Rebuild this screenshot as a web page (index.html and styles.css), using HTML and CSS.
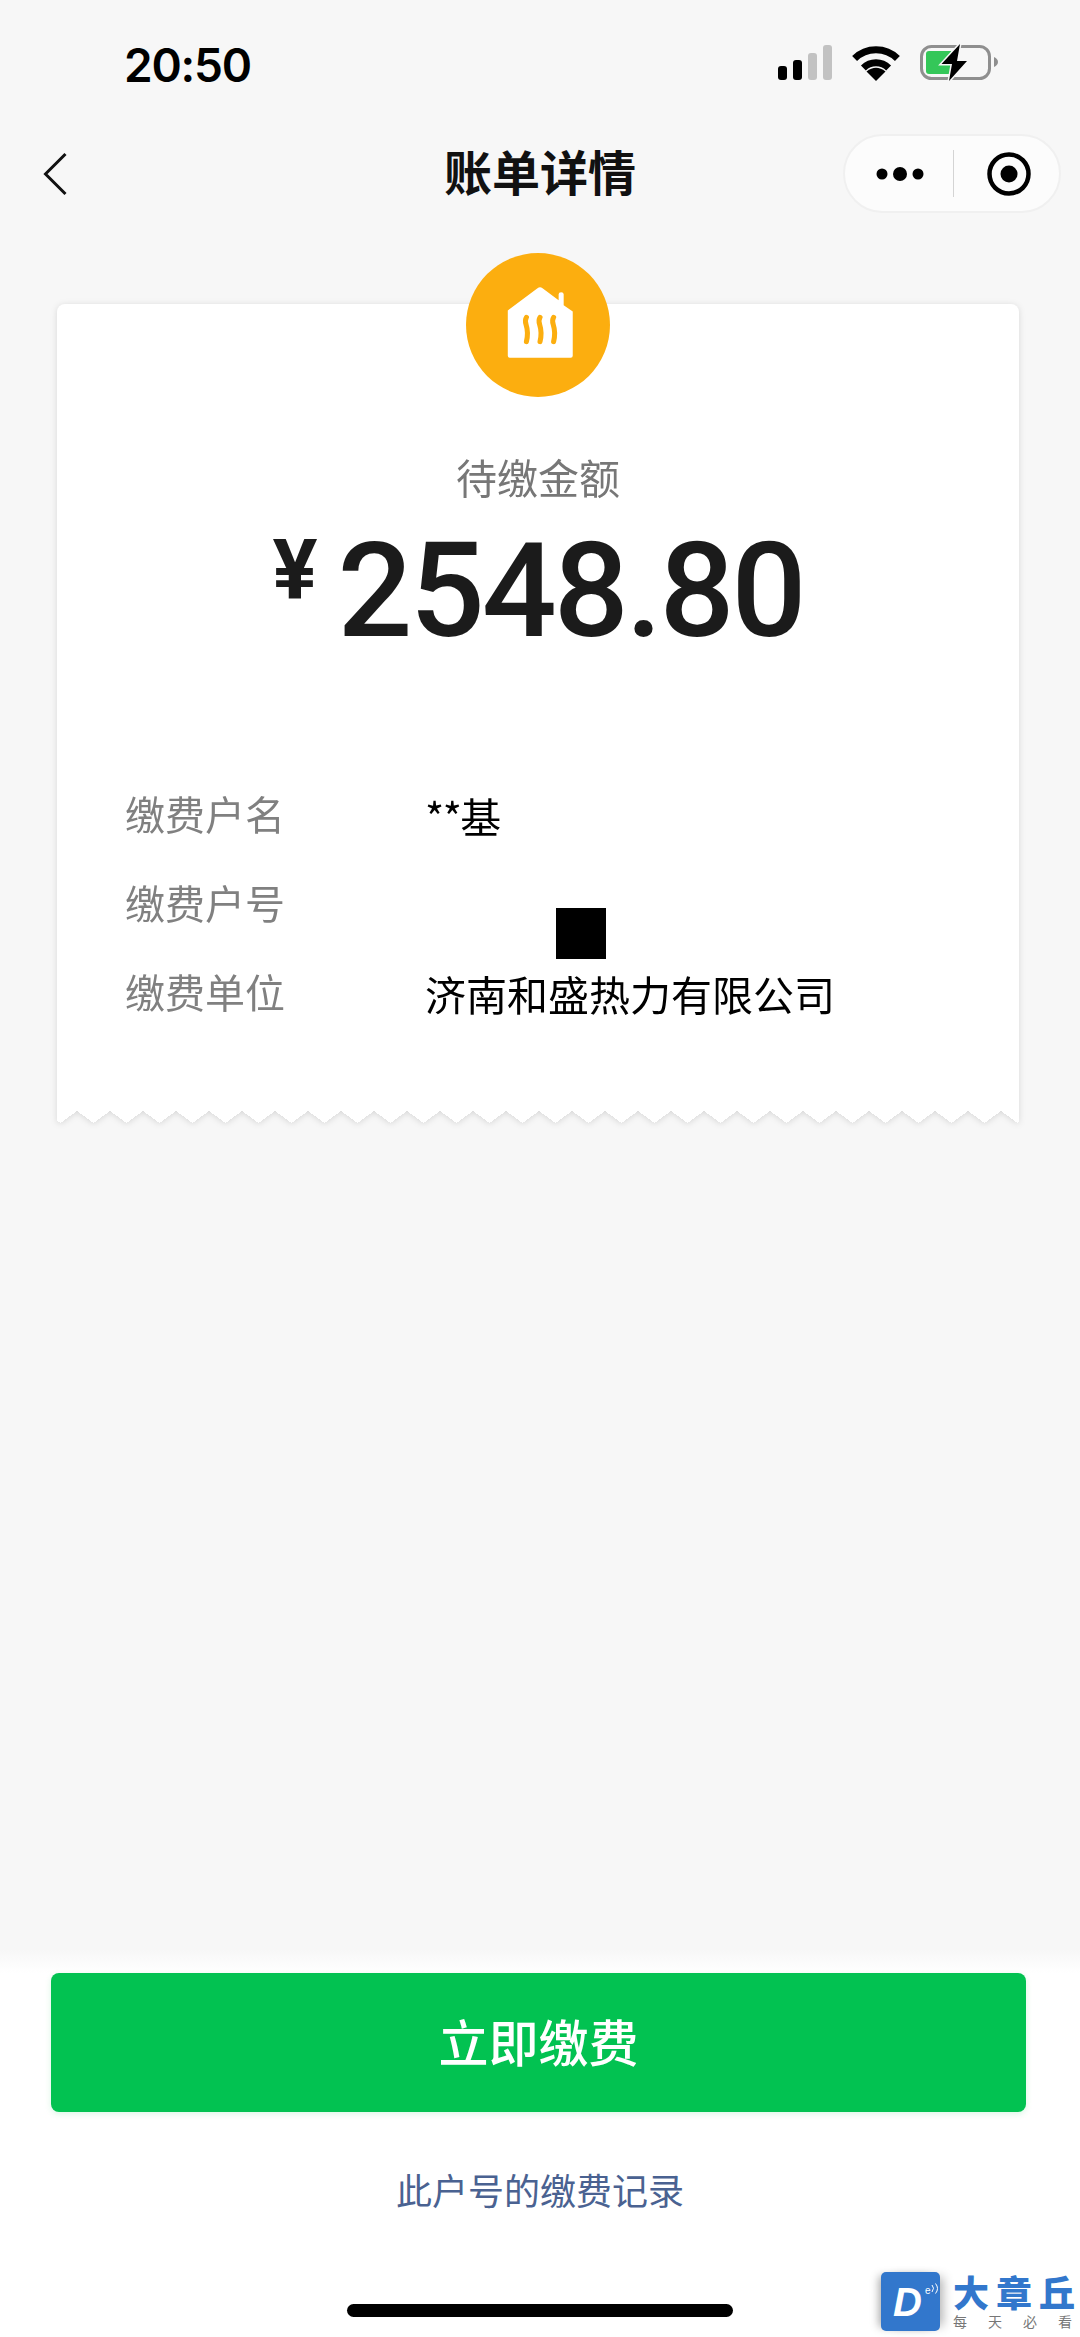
FILE: index.html
```html
<!DOCTYPE html>
<html lang="zh-CN">
<head>
  <meta charset="UTF-8">
  <title>账单详情</title>
  <link rel="stylesheet" href="styles.css">
</head>
<body>
  <!-- Status bar -->
  <div class="status-bar">
    <span class="status-time">20:50</span>
    <div class="status-icons">
      <svg class="icon-signal" width="54" height="36" viewBox="0 0 54 36">
        <rect x="0" y="21" width="9" height="14" rx="3" fill="#000"/>
        <rect x="15" y="15" width="9" height="20" rx="3" fill="#000"/>
        <rect x="30" y="8" width="9" height="27" rx="3" fill="#c2c2c2"/>
        <rect x="45" y="0" width="9" height="35" rx="3" fill="#c2c2c2"/>
      </svg>
      <svg class="icon-wifi" width="48" height="36" viewBox="0 0 48 36">
        <path d="M2.6 13.6a30.5 30.5 0 0 1 42.8 0" fill="none" stroke="#000" stroke-width="7"/>
        <path d="M11.4 23a18 18 0 0 1 25.2 0" fill="none" stroke="#000" stroke-width="7"/>
        <path d="M24 36 14.5 26.5Q24 19 33.5 26.5Z" fill="#000"/>
      </svg>
      <svg class="icon-battery" width="78" height="38" viewBox="0 0 78 38">
        <rect x="1.5" y="2.5" width="68" height="32" rx="10" fill="none" stroke="#8f8f8f" stroke-width="3"/>
        <path d="M9 7H31V30H9Q6 30 6 27V10Q6 7 9 7Z" fill="#34c759"/>
        <path d="M74 13Q78 15 78 18Q78 21 74 23Z" fill="#8f8f8f"/>
        <path d="M40 0 21.5 20H32L29 37 47 17H37Z" fill="#000" stroke="#f7f7f7" stroke-width="3" paint-order="stroke"/>
      </svg>
    </div>
  </div>

  <!-- Nav bar -->
  <div class="nav-bar">
    <div class="nav-left">
      <svg width="24" height="44" viewBox="0 0 24 44">
        <path d="M22.500 2 2.500 22 22.500 42" fill="none" stroke="#111" stroke-width="3"/>
      </svg>
    </div>
    <div class="nav-title">账单详情</div>
    <div class="nav-right">
      <div class="capsule">
        <svg class="capsule-dots" width="50" height="16" viewBox="0 0 50 16">
          <circle cx="6" cy="8" r="5.500" fill="#000"/>
          <circle cx="24" cy="8" r="7" fill="#000"/>
          <circle cx="42" cy="8" r="5.500" fill="#000"/>
        </svg>
        <div class="capsule-line"></div>
        <svg class="capsule-target" width="46" height="46" viewBox="0 0 46 46">
          <circle cx="23" cy="23" r="19.500" fill="none" stroke="#000" stroke-width="4.500"/>
          <circle cx="23" cy="23" r="8.500" fill="#000"/>
        </svg>
      </div>
    </div>
  </div>

  <!-- Bill card -->
  <div class="bill-section">
    <div class="bill-wrap">
      <div class="bill-card">
        <div class="bill-label">待缴金额</div>
        <div class="bill-amount">
          <span class="amount-unit">¥</span>
          <span class="amount-value">2548.80</span>
        </div>
        <div class="bill-rows">
          <div class="bill-row">
            <span class="row-name">缴费户名</span>
            <span class="row-value"><span class="row-mask">**</span>基</span>
          </div>
          <div class="bill-row">
            <span class="row-name">缴费户号</span>
            <span class="row-value"></span>
          </div>
          <div class="bill-row">
            <span class="row-name">缴费单位</span>
            <span class="row-value">济南和盛热力有限公司</span>
          </div>
        </div>
        <div class="redact-box"></div>
      </div>
      <div class="bill-edge"></div>
    </div>
    <div class="bill-badge">
      <svg width="144" height="144" viewBox="0 0 143 143">
        <path d="M41.500 57 71 35Q73.500 33 76 35L92 47V41Q92 39 94.500 39 97 39 97 41V52L106 58V102Q106 104 104 104H43.500Q41.500 104 41.500 102Z" fill="#fff"/>
        <path d="M60 64c-4 6 4 8 0 24M73.500 64c-4 6 4 8 0 24M87 64c-4 6 4 8 0 24" transform="translate(0 0)" fill="none" stroke="#fcae0f" stroke-width="5" stroke-linecap="round"/>
      </svg>
    </div>
  </div>

  <!-- Bottom actions -->
  <div class="bottom-panel">
    <button type="button" class="btn-pay">立即缴费</button>
    <a class="link-history">此户号的缴费记录</a>
    <div class="home-bar"></div>
  </div>

  <!-- Watermark over the corner -->
  <div class="watermark">
    <div class="wm-logo">
      <span class="wm-d">D</span>
      <span class="wm-e">e</span>
      <svg class="wm-waves" width="8" height="11" viewBox="0 0 8 11">
        <path d="M1 2q3 3 0 7M4.500 .5q4 5 0 10" fill="none" stroke="#fff" stroke-width="1"/>
      </svg>
    </div>
    <div class="wm-text">
      <div class="wm-name"><span>大</span><span>章</span><span>丘</span></div>
      <div class="wm-slogan"><span>每</span><span>天</span><span>必</span><span>看</span></div>
    </div>
  </div>
</body>
</html>
```

FILE: styles.css
```css
* {
  box-sizing: border-box;
}
html, body {
  margin: 0;
  padding: 0;
}
body {
  position: relative;
  width: 1080px;
  height: 2337px;
  overflow: hidden;
  display: flex;
  flex-direction: column;
  background-color: #f7f7f7;
  font-family: "Noto Sans CJK SC", "Noto Sans", sans-serif;
}

/* status bar */
.status-bar {
  height: 134px;
  padding: 39px 82px 0 124px;
  display: flex;
  justify-content: space-between;
  align-items: flex-start;
}
.status-time {
  font-family: Inter, sans-serif;
  font-size: 46px;
  font-weight: 600;
  line-height: 52px;
  letter-spacing: -1.2px;
  color: #000;
}
.status-icons {
  margin-top: 6px;
  display: flex;
  align-items: flex-start;
}
.icon-wifi { margin-left: 20px; }
.icon-battery { margin-left: 20px; margin-top: -1px; }

/* nav bar */
.nav-bar {
  height: 79px;
  padding: 0 19px;
  display: grid;
  grid-template-columns: minmax(0, 1fr) auto minmax(0, 1fr);
  align-items: center;
}
.nav-left {
  padding-left: 24px;
  display: flex;
  align-items: center;
}
.nav-title {
  font-size: 48px;
  font-weight: 700;
  line-height: 72px;
  margin-bottom: 7px;
  color: #111;
}
.nav-right {
  display: flex;
  justify-content: flex-end;
}
.capsule {
  width: 218px;
  height: 79px;
  flex: none;
  border: 2px solid #f0f0f0;
  border-radius: 40px;
  background-color: #fcfcfc;
  display: flex;
  align-items: center;
}
.capsule-dots { margin-left: 31px; }
.capsule-line {
  width: 1px;
  height: 47px;
  margin-left: 27px;
  background-color: #d4d4d4;
}
.capsule-target { margin-left: 32px; }

/* bill card */
.bill-section {
  position: relative;
  margin: 91px 61px 0 57px;
}
.bill-wrap {
  filter: drop-shadow(0 1px 3px rgba(0, 0, 0, 0.13));
}
.bill-card {
  position: relative;
  height: 807px;
  padding: 144px 68px 0;
  background-color: #fff;
  border-radius: 8px 8px 0 0;
}
.bill-edge {
  height: 12px;
  background-image: conic-gradient(from -54deg at 50% 100%, #fff 108deg, transparent 0);
  background-size: 33px 12px;
  background-position: -13px 0;
  background-repeat: repeat-x;
}
.bill-badge {
  position: absolute;
  left: 409px;
  top: -51px;
  width: 144px;
  height: 144px;
  border-radius: 50%;
  background-color: #fcae0f;
}
.bill-label {
  font-size: 41px;
  line-height: 56px;
  color: #777;
  text-align: center;
}
.bill-amount {
  margin-top: 21px;
  display: flex;
  justify-content: center;
  align-items: flex-start;
  color: #1b1b1b;
  font-family: Roboto, sans-serif;
  font-weight: 500;
}
.amount-unit {
  margin-top: 4px;
  margin-right: 20px;
  font-size: 84px;
  font-weight: 700;
  line-height: 84px;
}
.amount-value {
  font-size: 132px;
  line-height: 132px;
  letter-spacing: -3px;
}
.bill-rows {
  margin-top: 128px;
  display: flex;
  flex-direction: column;
  gap: 33px;
}
.bill-row {
  display: flex;
  align-items: center;
  height: 56px;
}
.row-name {
  width: 300px;
  flex: none;
  font-size: 40px;
  color: #808080;
}
.row-value {
  margin-top: 3px;
  font-size: 41px;
  color: #000;
}
.row-mask {
  letter-spacing: -1.5px;
}
.redact-box {
  position: absolute;
  left: 499px;
  top: 604px;
  width: 50px;
  height: 51px;
  background-color: #000;
}

/* bottom actions */
.bottom-panel {
  margin-top: auto;
  height: 387px;
  padding-top: 23px;
  display: flex;
  flex-direction: column;
  align-items: center;
  background: linear-gradient(#f7f7f7, #fff 23px);
}
.btn-pay {
  width: 975px;
  height: 139px;
  margin-left: -3px;
  padding-bottom: 6px;
  flex: none;
  border: 0;
  border-radius: 8px;
  background-color: #02c251;
  box-shadow: 0 2px 6px rgba(2, 194, 81, 0.15);
  color: #fff;
  font-family: inherit;
  font-size: 50px;
  font-weight: 500;
}
.link-history {
  margin-top: 52px;
  font-size: 36px;
  line-height: 50px;
  color: #4a6291;
}
.home-bar {
  width: 386px;
  height: 13px;
  margin-top: 90px;
  border-radius: 7px;
  background-color: #000;
}

/* watermark */
.watermark {
  position: absolute;
  left: 881px;
  top: 2272px;
  display: flex;
}
.wm-logo {
  position: relative;
  width: 59px;
  height: 59px;
  border-radius: 5px;
  background-color: #3277cc;
  box-shadow: -6px 0 8px -4px rgba(0, 0, 0, 0.35), 8px 0 10px -5px rgba(0, 0, 0, 0.3);
}
.wm-d {
  position: absolute;
  left: 12px;
  top: 10px;
  font-family: "Liberation Sans", sans-serif;
  font-size: 40px;
  font-style: italic;
  font-weight: 700;
  line-height: 40px;
  color: #fff;
}
.wm-e {
  position: absolute;
  left: 44px;
  top: 14px;
  font-family: "Liberation Sans", sans-serif;
  font-size: 10px;
  line-height: 10px;
  color: #fff;
}
.wm-waves {
  position: absolute;
  left: 50px;
  top: 11px;
}
.wm-text {
  margin-left: 13px;
}
.wm-name {
  margin-top: 1px;
  display: flex;
  gap: 7px;
  font-size: 36px;
  font-weight: 900;
  line-height: 36px;
  color: #3277cc;
}
.wm-slogan {
  margin-top: 4px;
  display: flex;
  gap: 21px;
  font-size: 14px;
  line-height: 16px;
  color: #777;
}
```
